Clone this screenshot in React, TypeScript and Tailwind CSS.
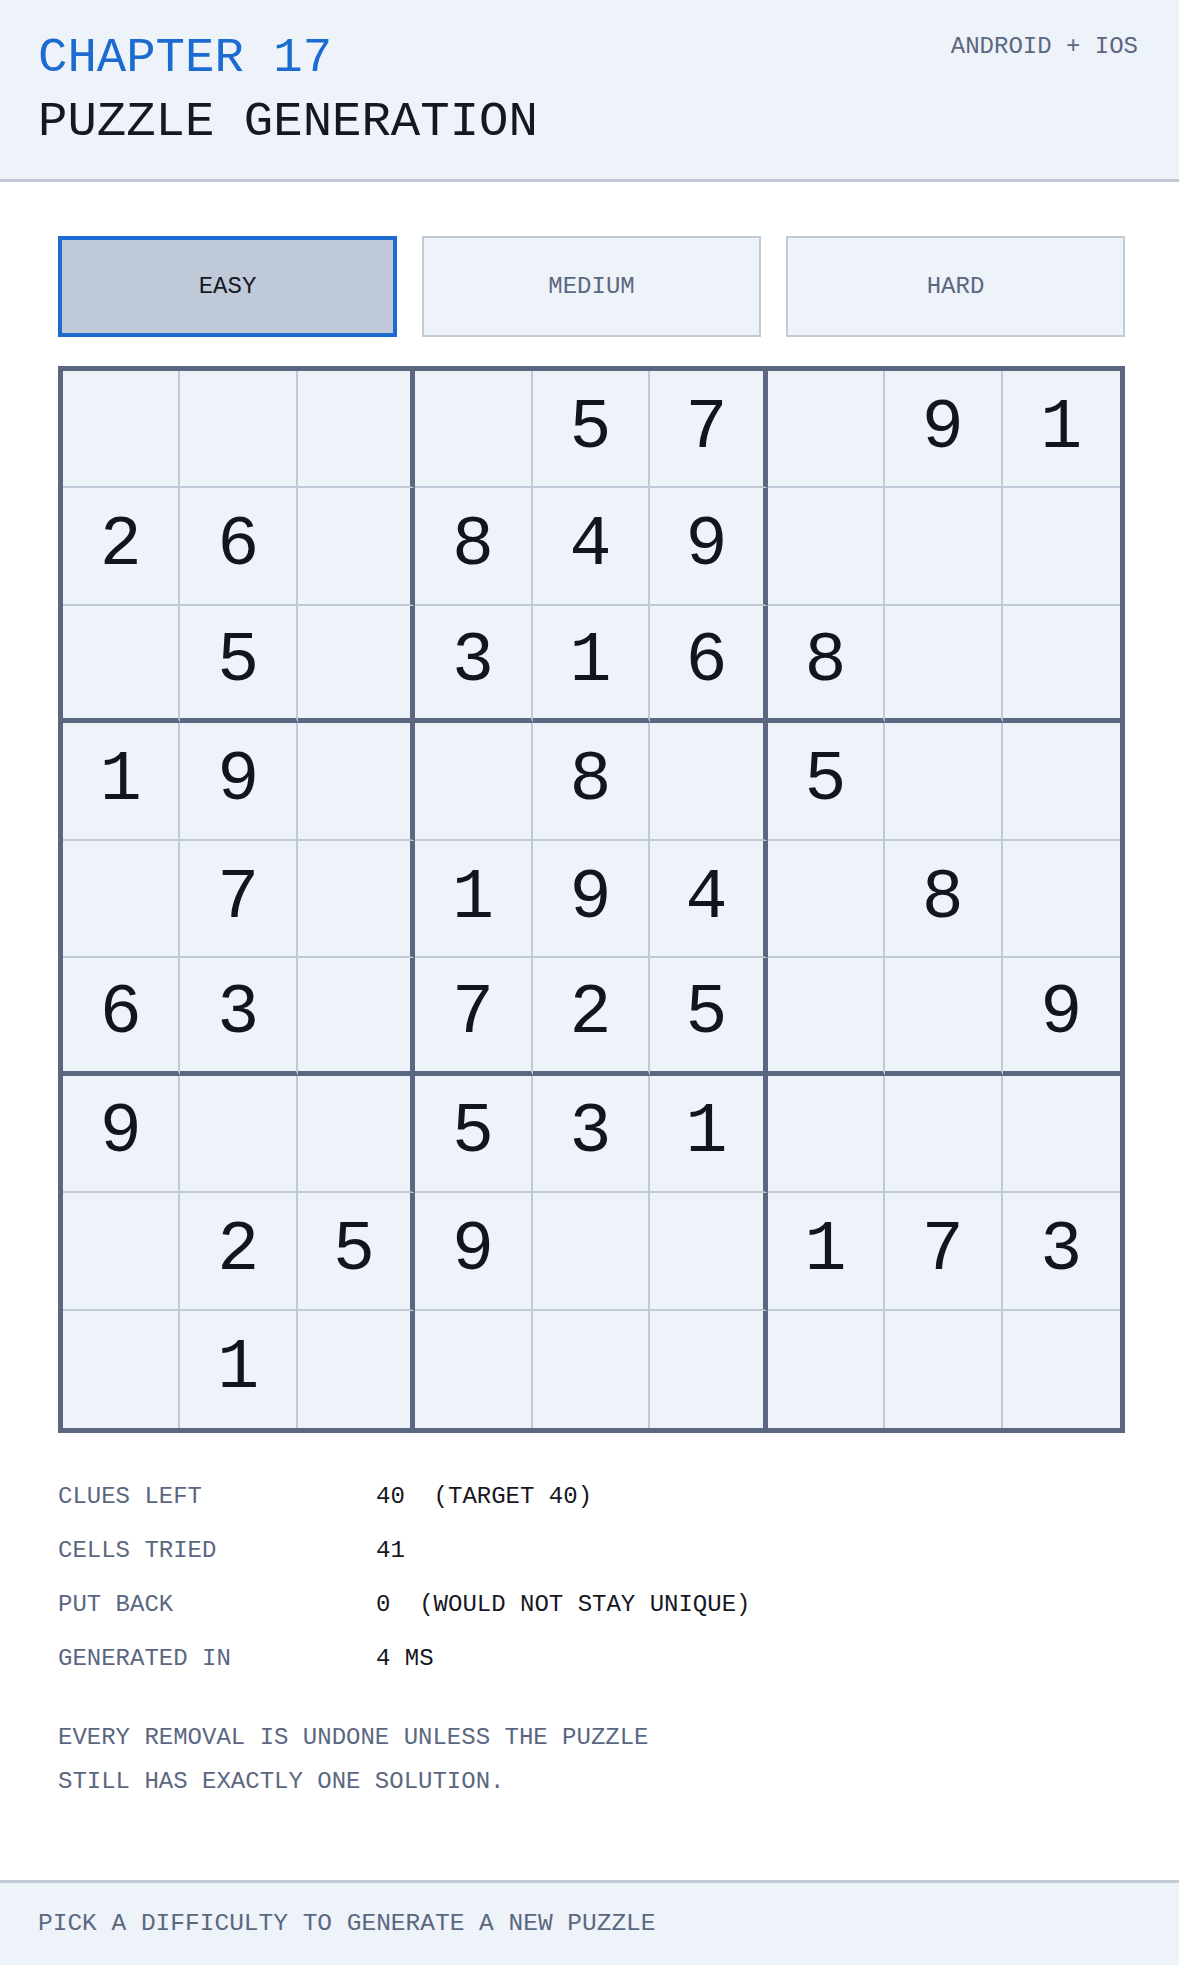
import { useState } from "react";

const PUZZLE: string[] = [
  "....57.91",
  "26.849...",
  ".5.3168..",
  "19..8.5..",
  ".7.194.8.",
  "63.725..9",
  "9..531...",
  ".259..173",
  ".1.......",
];

const LEVELS = ["EASY", "MEDIUM", "HARD"];

const STATS = [
  { label: "CLUES LEFT", value: "40  (TARGET 40)" },
  { label: "CELLS TRIED", value: "41" },
  { label: "PUT BACK", value: "0  (WOULD NOT STAY UNIQUE)" },
  { label: "GENERATED IN", value: "4 MS" },
];

const Cell = ({ value, row, col }: { value: string; row: number; col: number }) => {
  const right =
    col === 8 ? "border-r-0" : col === 2 || col === 5 ? "border-r-[5px] border-r-[#5b6780]" : "border-r-2 border-r-[#c0c9d8]";
  const bottom =
    row === 8 ? "border-b-0" : row === 2 || row === 5 ? "border-b-[5px] border-b-[#5b6780]" : "border-b-2 border-b-[#c0c9d8]";
  return (
    <div className={`aspect-square flex items-center justify-center bg-[#eef2f9] ${right} ${bottom}`}>
      {value !== "." && <span className="text-[70px] leading-none text-[#12151c]">{value}</span>}
    </div>
  );
};

const App = () => {
  const [level, setLevel] = useState("EASY");

  return (
    <div className="h-[1965px] flex flex-col bg-white font-['Liberation_Mono',monospace] uppercase">
      <header className="bg-[#eef2f9] border-b-[3px] border-[#c2cad6] px-[38px] pt-[30px] pb-[29px] flex justify-between">
        <div>
          <div className="text-[49px] leading-[56px] text-[#1c6bd0]">Chapter 17</div>
          <div className="mt-2 text-[49px] leading-[56px] text-[#15181f]">Puzzle Generation</div>
        </div>
        <div className="text-[24px] leading-[28px] text-[#5b6780] mt-[3px] mr-[3px]">Android + iOS</div>
      </header>

      <main className="flex-1 pl-[58px] pr-[54px] pt-[54px]">
        <div className="grid grid-cols-3 gap-[25px]">
          {LEVELS.map(l => (
            <button
              key={l}
              onClick={() => setLevel(l)}
              className={
                l === level
                  ? "h-[101px] border-[4px] border-[#1c6bd0] bg-[#c0c9d8] text-[24px] text-[#15181f]"
                  : "h-[101px] border-2 border-[#c2cad6] bg-[#eef2f9] text-[24px] text-[#5b6780]"
              }
            >
              {l}
            </button>
          ))}
        </div>

        <div className="mt-[29px] grid grid-cols-9 border-[5px] border-[#5b6780]">
          {PUZZLE.map((r, ri) =>
            r.split("").map((v, ci) => <Cell key={`${ri}-${ci}`} value={v} row={ri} col={ci} />)
          )}
        </div>

        <div className="mt-[37px] grid grid-cols-[318px_1fr] text-[24px] leading-[54px]">
          {STATS.map(s => (
            <div key={s.label} className="contents">
              <div className="text-[#5b6780]">{s.label}</div>
              <div className="text-[#15181f] whitespace-pre">{s.value}</div>
            </div>
          ))}
        </div>

        <p className="mt-[30px] text-[24px] leading-[44px] text-[#5b6780]">
          Every removal is undone unless the puzzle
          <br />
          still has exactly one solution.
        </p>
      </main>

      <footer className="h-[85px] bg-[#eef2f9] border-t-[3px] border-[#c2cad6] px-[38px] flex items-center">
        <span className="text-[24.5px] text-[#5b6780]">Pick a difficulty to generate a new puzzle</span>
      </footer>
    </div>
  );
};

export default App;
